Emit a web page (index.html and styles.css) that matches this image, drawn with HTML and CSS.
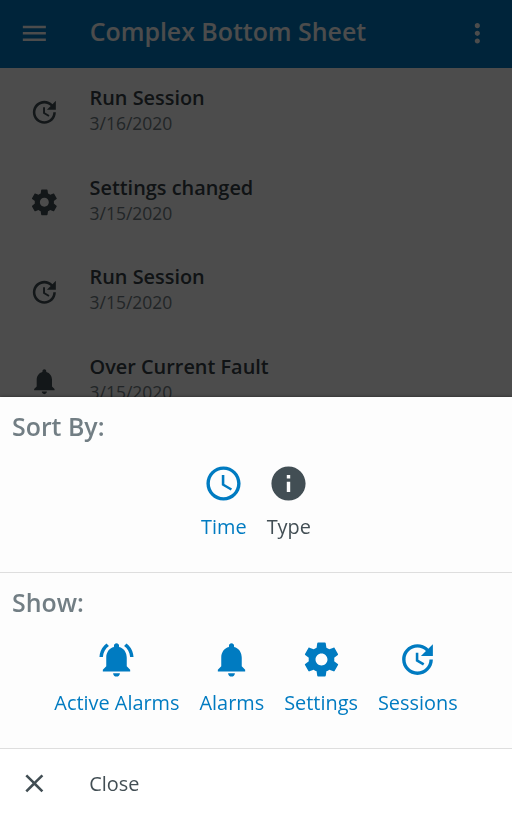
FILE: index.html
```html
<!DOCTYPE html>
<html lang="en">
<head>
<meta charset="utf-8">
<title>Complex Bottom Sheet</title>
<link rel="stylesheet" href="styles.css">
</head>
<body>
<svg class="sprite" aria-hidden="true">
  <symbol id="update" viewBox="0 0 24 24"><path d="M11 8v5l4.250 2.520.770-1.280-3.520-2.090V8H11zm10 2V3l-2.640 2.640C16.740 4.010 14.490 3 12 3c-4.970 0-9 4.030-9 9s4.030 9 9 9 9-4.030 9-9h-2c0 3.860-3.140 7-7 7s-7-3.140-7-7 3.140-7 7-7c1.930 0 3.680.790 4.950 2.050L14 10h7z"/></symbol>
  <symbol id="gear" viewBox="0 0 24 24"><path d="M19.430 12.980c.040-.320.070-.640.070-.980s-.030-.660-.070-.980l2.110-1.650c.190-.150.240-.420.120-.640l-2-3.460c-.120-.220-.390-.300-.610-.220l-2.490 1c-.520-.400-1.080-.730-1.690-.980l-.380-2.650C14.460 2.180 14.250 2 14 2h-4c-.250 0-.460.180-.490.420l-.380 2.650c-.610.250-1.170.590-1.690.980l-2.490-1c-.230-.090-.490 0-.610.220l-2 3.460c-.130.220-.070.490.120.640l2.110 1.650c-.040.320-.070.650-.070.980s.030.660.070.980l-2.110 1.650c-.190.150-.240.420-.120.640l2 3.460c.120.220.390.300.610.220l2.490-1c.520.400 1.080.730 1.690.980l.380 2.650c.030.240.240.420.490.420h4c.250 0 .460-.180.490-.420l.380-2.650c.610-.250 1.170-.590 1.690-.980l2.490 1c.230.090.490 0 .610-.220l2-3.460c.120-.220.070-.490-.120-.640l-2.110-1.650zM12 15.500c-1.930 0-3.500-1.570-3.500-3.500s1.570-3.500 3.500-3.500 3.500 1.570 3.500 3.500-1.570 3.500-3.500 3.500z"/></symbol>
  <symbol id="bell" viewBox="0 0 24 24"><path d="M12 22c1.100 0 2-.900 2-2h-4c0 1.100.890 2 2 2zm6-6v-5c0-3.070-1.640-5.640-4.500-6.320V4c0-.830-.670-1.500-1.500-1.500s-1.500.670-1.500 1.500v.680C7.630 5.360 6 7.920 6 11v5l-2 2v1h16v-1l-2-2z"/></symbol>
  <symbol id="bell-active" viewBox="0 0 24 24"><path d="M7.580 4.080L6.150 2.650C3.750 4.480 2.170 7.300 2.030 10.500h2c.150-2.650 1.510-4.970 3.550-6.420zm12.390 6.420h2c-.150-3.200-1.730-6.020-4.120-7.850l-1.420 1.430c2.020 1.450 3.390 3.770 3.540 6.420zM18 11c0-3.070-1.640-5.640-4.500-6.320V4c0-.830-.670-1.500-1.500-1.500s-1.500.670-1.500 1.500v.680C7.630 5.360 6 7.920 6 11v5l-2 2v1h16v-1l-2-2v-5zm-6 11c1.100 0 2-.900 2-2h-4c0 1.100.900 2 2 2z"/></symbol>
  <symbol id="clock" viewBox="0 0 24 24"><path d="M11.990 2C6.470 2 2 6.480 2 12s4.470 10 9.990 10C17.520 22 22 17.520 22 12S17.520 2 11.990 2zM12 20c-4.420 0-8-3.580-8-8s3.580-8 8-8 8 3.580 8 8-3.580 8-8 8zm.5-13H11v6l5.250 3.150.75-1.230-4.500-2.670z"/></symbol>
  <symbol id="info" viewBox="0 0 24 24"><path d="M12 2C6.480 2 2 6.480 2 12s4.480 10 10 10 10-4.480 10-10S17.520 2 12 2zm1 15h-2v-6h2v6zm0-8h-2V7h2v2z"/></symbol>
  <symbol id="menu" viewBox="0 0 24 24"><path d="M3 18h18v-2H3v2zm0-5h18v-2H3v2zm0-7v2h18V6H3z"/></symbol>
  <symbol id="more" viewBox="0 0 24 24"><path d="M12 8c1.100 0 2-.900 2-2s-.900-2-2-2-2 .900-2 2 .900 2 2 2zm0 2c-1.100 0-2 .900-2 2s.900 2 2 2 2-.900 2-2-.900-2-2-2zm0 6c-1.100 0-2 .900-2 2s.900 2 2 2 2-.900 2-2-.900-2-2-2z"/></symbol>
  <symbol id="close" viewBox="0 0 24 24"><path d="M19 6.410L17.590 5 12 10.590 6.410 5 5 6.410 10.590 12 5 17.590 6.410 19 12 13.410 17.590 19 19 17.590 13.410 12z"/></symbol>
</svg>
<div class="page">
  <header class="toolbar">
    <svg class="icon"><use href="#menu"/></svg>
    <h1 class="toolbar-title">Complex Bottom Sheet</h1>
    <svg class="icon"><use href="#more"/></svg>
  </header>
  <ul class="events">
    <li class="event"><svg class="icon"><use href="#update"/></svg><div><div class="event-title">Run Session</div><div class="event-date">3/16/2020</div></div></li>
    <li class="event"><svg class="icon"><use href="#gear"/></svg><div><div class="event-title">Settings changed</div><div class="event-date">3/15/2020</div></div></li>
    <li class="event"><svg class="icon"><use href="#update"/></svg><div><div class="event-title">Run Session</div><div class="event-date">3/15/2020</div></div></li>
    <li class="event"><svg class="icon"><use href="#bell"/></svg><div><div class="event-title">Over Current Fault</div><div class="event-date">3/15/2020</div></div></li>
  </ul>
</div>
<div class="backdrop"></div>
<div class="sheet">
  <section class="group">
    <h2 class="group-title">Sort By:</h2>
    <div class="options">
      <div class="option selected"><svg class="option-icon"><use href="#clock"/></svg><span>Time</span></div>
      <div class="option"><svg class="option-icon"><use href="#info"/></svg><span>Type</span></div>
    </div>
  </section>
  <section class="group">
    <h2 class="group-title">Show:</h2>
    <div class="options">
      <div class="option selected"><svg class="option-icon"><use href="#bell-active"/></svg><span>Active Alarms</span></div>
      <div class="option selected"><svg class="option-icon"><use href="#bell"/></svg><span>Alarms</span></div>
      <div class="option selected"><svg class="option-icon"><use href="#gear"/></svg><span>Settings</span></div>
      <div class="option selected"><svg class="option-icon"><use href="#update"/></svg><span>Sessions</span></div>
    </div>
  </section>
  <div class="close"><svg class="icon"><use href="#close"/></svg><span>Close</span></div>
</div>
</body>
</html>
```
FILE: styles.css
```css
* { box-sizing: border-box; }
body {
  margin: 0;
  height: 818px;
  overflow: hidden;
  font-family: "Open Sans", sans-serif;
  color: #424e54;
  background: #fff;
}
.sprite { display: none; }
svg { fill: currentColor; display: block; flex: none; }
.icon { width: 30.7px; height: 30.7px; }
.toolbar {
  height: 68px;
  padding: 0 19.5px 2px 19px;
  display: flex;
  align-items: center;
  background: #007bc1;
  color: #fff;
}
.toolbar-title {
  flex: 1;
  margin: -4px 0 0 40px;
  font-size: 24.9px;
  line-height: 36px;
  font-weight: 600;
}
.events { list-style: none; margin: 0; padding: 0; }
.event {
  height: 89.6px;
  padding-left: 29px;
  display: flex;
  align-items: center;
  gap: 29.8px;
}
.event-title { font-size: 19.9px; line-height: 28px; font-weight: 600; color: #364147; }
.event-date { font-size: 17.5px; line-height: 22px; color: #727e84; }
.event > div { padding-bottom: 7.4px; }
.backdrop { position: fixed; inset: 0; background: rgba(0, 0, 0, .7); }
.sheet {
  position: fixed;
  left: 0;
  right: 0;
  bottom: 0;
  height: 421px;
  background: #fdfdfd;
  box-shadow: 0 0 3px rgba(0, 0, 0, .5);
}
.group { height: 176px; padding-top: 11px; border-bottom: 1px solid #dedede; }
.group-title {
  margin: 0;
  padding-left: 12px;
  font-size: 24.9px;
  line-height: 36px;
  font-weight: 600;
  color: #727e84;
}
.options { display: flex; justify-content: center; gap: 20px; padding-top: 18.5px; }
.option {
  display: flex;
  flex-direction: column;
  align-items: center;
  gap: 9.3px;
  font-size: 19.9px;
  line-height: 28px;
}
.option-icon { width: 41px; height: 41px; }
.selected { color: #007bc1; }
.close {
  height: 69px;
  padding: 0 0 0 19px;
  display: flex;
  align-items: center;
  gap: 39.5px;
  background: #fff;
  font-size: 19.9px;
}
```
